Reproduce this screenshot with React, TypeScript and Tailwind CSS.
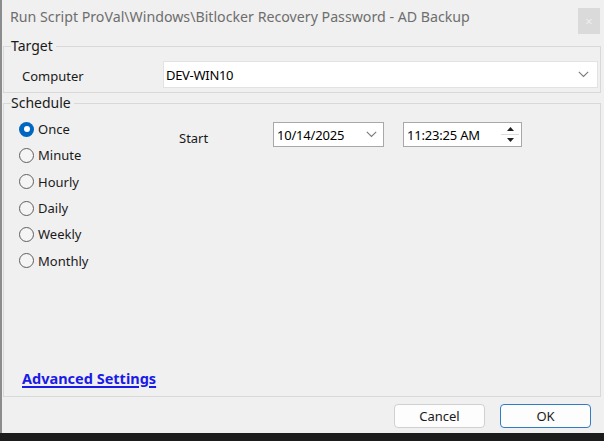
import React from "react";

const Chevron = ({ className }: { className?: string }) => (
  <svg width="11" height="7" viewBox="0 0 11 7" className={className}>
    <path d="M0.8 0.8 L5.5 5.5 L10.2 0.8" fill="none" stroke="#7a7a7a" strokeWidth="1.1" />
  </svg>
);

const Radio = ({ label, checked }: { label: string; checked?: boolean }) => (
  <div className="flex h-[26.3px] items-center">
    {checked ? (
      <span className="flex h-[15px] w-[15px] items-center justify-center rounded-full bg-[#0067c0]">
        <span className="h-[6px] w-[6px] rounded-full bg-white" />
      </span>
    ) : (
      <span className="h-[15px] w-[15px] rounded-full border border-[#5f5f5f] bg-[#f5f5f5]" />
    )}
    <span className="ml-[4px] text-[13px] leading-[18px] text-[#1a1a1a]">{label}</span>
  </div>
);

export default function App() {
  return (
    <div className="flex h-[441px] w-[604px] flex-col bg-[#1c1c1c] font-['Noto_Sans',sans-serif]">
      <div className="flex h-[433px] flex-col border-l-[2px] border-[#8c8c8c] bg-[#f0f0f0]">
        {/* title bar */}
        <div className="flex h-[37px] items-start">
          <div className="ml-[8px] mt-[7px] text-[14.2px] leading-[20px] text-[#6e6e6e]">
            Run Script ProVal\Windows\Bitlocker Recovery Password - AD Backup
          </div>
          <div className="ml-auto mr-[4px] mt-[8px] flex h-[26px] w-[22px] items-center justify-center bg-[#dadada] text-[13px] leading-none text-[#eeeeee]">
            ×
          </div>
        </div>

        {/* Target */}
        <fieldset className="ml-[1px] mr-[3px] border border-[#d9d9d9] pb-[4px]">
          <legend className="ml-[7px] pr-[3px] text-[14px] leading-[18px] text-[#1a1a1a]">Target</legend>
          <div className="mt-[6px] flex items-center">
            <span className="ml-[18px] w-[141px] pt-[2px] text-[13px] leading-[18px] text-[#1a1a1a]">Computer</span>
            <div className="flex h-[27px] w-[435px] items-center border border-[#e2e2e2] bg-white pl-[2px] pr-[8px]">
              <span className="text-[13px] leading-[18px] tracking-[-0.3px] text-black">DEV-WIN10</span>
              <Chevron className="ml-auto" />
            </div>
          </div>
        </fieldset>

        {/* Schedule */}
        <fieldset className="ml-[1px] mr-[3px] mt-[1px] h-[303px] border border-[#d9d9d9]">
          <legend className="ml-[7px] pr-[3px] text-[14px] leading-[18px] text-[#1a1a1a]">Schedule</legend>
          <div className="flex">
            <div className="ml-[15px] mt-[4px] flex w-[160px] flex-col">
              <Radio label="Once" checked />
              <Radio label="Minute" />
              <Radio label="Hourly" />
              <Radio label="Daily" />
              <Radio label="Weekly" />
              <Radio label="Monthly" />
            </div>
            <div className="mt-[10px] flex items-start">
              <span className="mt-[7px] w-[94px] text-[13px] leading-[18px] text-[#1a1a1a]">Start</span>
              <div className="flex h-[25px] w-[111px] items-center border border-[#a8a8a8] bg-white pl-[3px] pr-[6px]">
                <span className="text-[13px] leading-[18px] tracking-[-0.2px] text-black">10/14/2025</span>
                <Chevron className="ml-auto" />
              </div>
              <div className="ml-[19px] flex h-[25px] w-[119px] items-center border border-[#a8a8a8] bg-white pl-[3px] pr-[2px]">
                <span className="text-[13px] leading-[18px] tracking-[-0.2px] text-black">11:23:25 AM</span>
                <div className="ml-auto flex h-[21px] w-[18px] flex-col">
                  <div className="flex flex-1 items-center justify-center border-b border-[#dcdcdc]">
                    <svg width="7" height="4" viewBox="0 0 7 4"><path d="M0 4 L3.5 0 L7 4 Z" fill="#222" /></svg>
                  </div>
                  <div className="flex flex-1 items-center justify-center">
                    <svg width="7" height="4" viewBox="0 0 7 4"><path d="M0 0 L3.5 4 L7 0 Z" fill="#222" /></svg>
                  </div>
                </div>
              </div>
            </div>
          </div>
          <div className="ml-[18px] mt-[95px] text-[14.5px] font-bold leading-[18px] text-[#1a1ae8] underline decoration-[1.5px] underline-offset-[2px]">
            Advanced Settings
          </div>
        </fieldset>

        {/* buttons */}
        <div className="flex flex-1 items-start justify-end pr-[13px] pt-[7px]">
          <button className="h-[24px] w-[91px] rounded-[4px] border border-[#d0d0d0] bg-[#fdfdfd] text-[13px] leading-[18px] text-[#1a1a1a]">
            Cancel
          </button>
          <button className="ml-[15px] h-[24px] w-[91px] rounded-[4px] border-[1.5px] border-[#2f7dc4] bg-[#fdfdfd] text-[13px] leading-[18px] text-[#1a1a1a]">
            OK
          </button>
        </div>
      </div>
    </div>
  );
}
